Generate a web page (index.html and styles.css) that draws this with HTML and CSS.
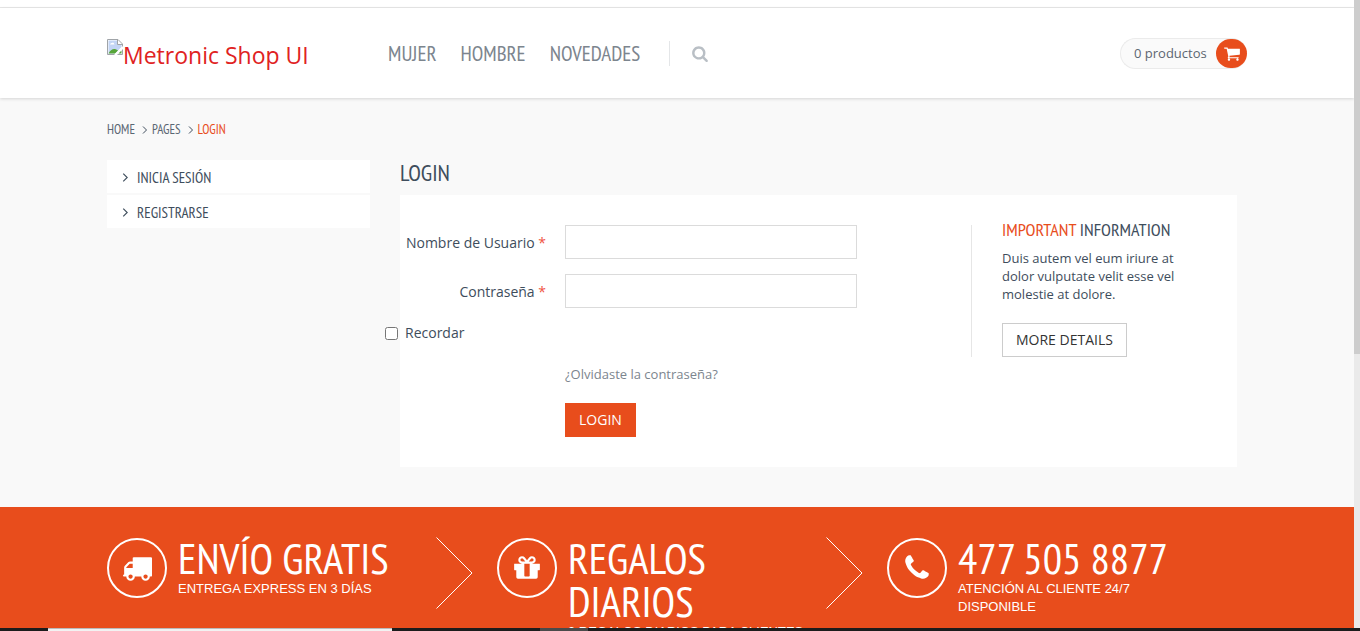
FILE: index.html
```html
<!DOCTYPE html>
<html lang="es">
<head>
<meta charset="utf-8">
<meta name="viewport" content="width=device-width, initial-scale=1">
<title>Login - Metronic Shop UI</title>
<link rel="stylesheet" href="styles.css">
</head>
<body>
<svg class="sprite" aria-hidden="true">
  <symbol id="search" viewBox="0 -1536 1664 1792"><path transform="scale(1,-1)" fill-rule="evenodd" d="M1152 704q0 185 -131.5 316.5t-316.5 131.5t-316.5 -131.5t-131.5 -316.5t131.5 -316.5t316.5 -131.5t316.5 131.5t131.5 316.5zM1664 -128q0 -52 -38 -90t-90 -38q-54 0 -90 38l-343 342q-179 -124 -399 -124q-143 0 -273.5 55.5t-225 150t-150 225t-55.5 273.5t55.5 273.5t150 225t225 150t273.5 55.5t273.5 -55.5t225 -150t150 -225t55.5 -273.5q0 -220 -124 -399l343 -343q37 -37 37 -90z"/></symbol>
  <symbol id="cart" viewBox="0 -1536 1664 1792"><path transform="scale(1,-1)" d="M640 0q0 -52 -38 -90t-90 -38t-90 38t-38 90t38 90t90 38t90 -38t38 -90zM1536 0q0 -52 -38 -90t-90 -38t-90 38t-38 90t38 90t90 38t90 -38t38 -90zM1664 1088v-512q0 -24 -16.5 -42.5t-40.5 -21.5l-1044 -122q13 -60 13 -70q0 -16 -24 -64h920q26 0 45 -19t19 -45t-19 -45t-45 -19h-1024q-26 0 -45 19t-19 45q0 11 8 31.5t16 36t21.5 40t15.5 29.5l-177 823h-204q-26 0 -45 19t-19 45t19 45t45 19h256q16 0 28.5 -6.5t19.5 -15.5t13 -24.5t8 -26t5.5 -29.5t4.5 -26h1201q26 0 45 -19t19 -45z"/></symbol>
  <symbol id="truck" viewBox="0 -1536 1792 1792"><path transform="scale(1,-1)" d="M640 128q0 52 -38 90t-90 38t-90 -38t-38 -90t38 -90t90 -38t90 38t38 90zM256 640h384v256h-158q-13 0 -22 -9l-195 -195q-9 -9 -9 -22v-30zM1536 128q0 52 -38 90t-90 38t-90 -38t-38 -90t38 -90t90 -38t90 38t38 90zM1792 1216v-1024q0 -15 -4 -26.5t-13.5 -18.5t-16.5 -11.5t-23.5 -6t-22.5 -2t-25.5 0t-22.5 0.5q0 -106 -75 -181t-181 -75t-181 75t-75 181h-384q0 -106 -75 -181t-181 -75t-181 75t-75 181h-64q-3 0 -22.5 -0.5t-25.5 0t-22.5 2t-23.5 6t-16.5 11.5t-13.5 18.5t-4 26.5q0 26 19 45t45 19v320q0 8 -0.5 35t0 38t2.5 34.5t6.5 37t14 30.5t22.5 30l198 198q19 19 50.5 32t58.5 13h160v192q0 26 19 45t45 19h1024q26 0 45 -19t19 -45z"/></symbol>
  <symbol id="gift" viewBox="0 -1536 1536 1792"><path transform="scale(1,-1)" d="M928 180v56v468v192h-320v-192v-468v-56q0 -25 18 -38.5t46 -13.5h192q28 0 46 13.5t18 38.5zM472 1024h195l-126 161q-26 31 -69 31q-40 0 -68 -28t-28 -68t28 -68t68 -28zM1160 1120q0 40 -28 68t-68 28q-43 0 -69 -31l-125 -161h194q40 0 68 28t28 68zM1536 864v-320q0 -14 -9 -23t-23 -9h-96v-416q0 -40 -28 -68t-68 -28h-1088q-40 0 -68 28t-28 68v416h-96q-14 0 -23 9t-9 23v320q0 14 9 23t23 9h440q-93 0 -158.5 65.5t-65.5 158.5t65.5 158.5t158.5 65.5q107 0 168 -77l128 -165l128 165q61 77 168 77q93 0 158.5 -65.5t65.5 -158.5t-65.5 -158.5t-158.5 -65.5h440q14 0 23 -9t9 -23z"/></symbol>
  <symbol id="phone" viewBox="0 -1536 1408 1792"><path transform="scale(1,-1)" d="M1408 296q0 -27 -10 -70.5t-21 -68.5q-21 -50 -122 -106q-94 -51 -186 -51q-27 0 -53 3.5t-57.5 12.5t-47 14.5t-55.5 20.5t-49 18q-98 35 -175 83q-127 79 -264 216t-216 264q-48 77 -83 175q-3 9 -18 49t-20.5 55.5t-14.5 47t-12.5 57.5t-3.5 53q0 92 51 186q56 101 106 122q25 11 68.5 21t70.5 10q14 0 21 -3q18 -6 53 -76q11 -19 30 -54t35 -63.5t31 -53.5q3 -4 17.5 -25t21.5 -35.5t7 -28.5q0 -20 -28.5 -50t-62 -55t-62 -53t-28.5 -46q0 -9 5 -22.5t8.5 -20.5t14 -24t11.5 -19q76 -137 174 -235t235 -174q2 -1 19 -11.5t24 -14t20.5 -8.5t22.5 -5q18 0 46 28.5t53 62t55 62t50 28.5q14 0 28.5 -7t35.5 -21.5t25 -17.5q25 -15 53.5 -31t63.5 -35t54 -30q70 -35 76 -53q3 -7 3 -21z"/></symbol>
  <symbol id="angle" viewBox="0 0 6 8"><path d="M1 0.5L4.5 4L1 7.5" fill="none" stroke="currentColor" stroke-width="1"/></symbol>
  <symbol id="chevron" viewBox="0 0 37 72"><path d="M0.5 0.5L36 36L0.5 71.5" fill="none" stroke="currentColor" stroke-width="1"/></symbol>
</svg>
<div class="window">
  <div class="page">
    <div class="topbar"></div>
    <header class="header">
      <div class="container header-row">
        <a class="logo" href="#">
          <svg class="broken" viewBox="0 0 16 16" aria-hidden="true">
            <path d="M0.5 0.5H11L15.5 5V15.5H0.5Z" fill="#fff" stroke="#a0a4a8"/>
            <path d="M1.5 1.5H10.5V5.5H14.5V8L8 14.5H1.5Z" fill="#c3d5f5"/>
            <path d="M3 5.5Q3.500 3.500 5 4Q6.500 2.500 7.500 5.500Z" fill="#fff"/>
            <path d="M1.500 14.500Q4 9.500 8 10Q10 10.500 11 11.500L8 14.500Z" fill="#57a639"/>
            <path d="M16 7L7 16H10L16 10Z" fill="#fff"/>
            <path d="M14.500 11.500V14.500H11.500Z" fill="#57a639"/>
            <path d="M10.500 0.500V5.500H15.500" fill="none" stroke="#a0a4a8"/>
          </svg><span>Metronic Shop UI</span>
        </a>
        <nav class="nav">
          <a href="#">MUJER</a>
          <a href="#">HOMBRE</a>
          <a href="#">NOVEDADES</a>
          <button class="search" type="button" aria-label="Buscar"><svg><use href="#search"/></svg></button>
        </nav>
        <a class="cart" href="#"><span>0 productos</span><i class="cart-badge"><svg><use href="#cart"/></svg></i></a>
      </div>
    </header>
    <main class="container main">
      <nav class="crumbs">
        <a href="#">HOME</a><svg><use href="#angle"/></svg>
        <a href="#">PAGES</a><svg><use href="#angle"/></svg>
        <span class="accent">LOGIN</span>
      </nav>
      <div class="columns">
        <ul class="sidebar">
          <li><a href="#"><svg><use href="#angle"/></svg>INICIA SESIÓN</a></li>
          <li><a href="#"><svg><use href="#angle"/></svg>REGISTRARSE</a></li>
        </ul>
        <section class="content">
          <h1>LOGIN</h1>
          <div class="panel">
            <form class="form">
              <label for="user">Nombre de Usuario <b>*</b></label>
              <input class="field" id="user" type="text">
              <label for="pass">Contraseña <b>*</b></label>
              <input class="field" id="pass" type="password">
              <div class="remember"><input id="remember" type="checkbox"><label for="remember">Recordar</label></div>
              <a class="forgot" href="#">¿Olvidaste la contraseña?</a>
              <button class="submit" type="submit">LOGIN</button>
            </form>
            <aside class="info">
              <h2><span class="accent">IMPORTANT</span> INFORMATION</h2>
              <p>Duis autem vel eum iriure at dolor vulputate velit esse vel molestie at dolore.</p>
              <button class="details" type="button">MORE DETAILS</button>
            </aside>
          </div>
        </section>
      </div>
    </main>
    <section class="steps">
      <div class="container steps-row">
        <div class="step">
          <span class="disc"><svg class="wide"><use href="#truck"/></svg></span>
          <div class="step-text"><h2>ENVÍO GRATIS</h2><em>ENTREGA EXPRESS EN 3 DÍAS</em></div>
          <svg class="chevron"><use href="#chevron"/></svg>
        </div>
        <div class="step">
          <span class="disc"><svg><use href="#gift"/></svg></span>
          <div class="step-text"><h2>REGALOS DIARIOS</h2><em>3 REGALOS DIARIOS PARA CLIENTES</em></div>
          <svg class="chevron"><use href="#chevron"/></svg>
        </div>
        <div class="step">
          <span class="disc"><svg><use href="#phone"/></svg></span>
          <div class="step-text"><h2>477 505 8877</h2><em>ATENCIÓN AL CLIENTE 24/7 DISPONIBLE</em></div>
        </div>
      </div>
    </section>
  </div>
  <div class="scrollbar"><div class="thumb"></div></div>
</div>
<div class="taskbar"><span class="task-search"></span><span class="task-active"></span></div>
</body>
</html>
```
FILE: styles.css
```css
* { box-sizing: border-box; }

body {
  margin: 0;
  height: 100vh;
  display: flex;
  flex-direction: column;
  overflow: hidden;
  background: #f9f9f9;
  color: #3e4d5c;
  font: 13px/18px "Open Sans", sans-serif;
}

h1, h2, p, ul { margin: 0; padding: 0; font-weight: 400; }
a { color: inherit; text-decoration: none; }
button { font: inherit; cursor: pointer; }
svg { fill: currentColor; flex: none; }
.sprite { position: absolute; width: 0; height: 0; }
.accent { color: #e84d1c; }

.nav, .crumbs, .sidebar, h1, h2 {
  font-family: "PT Sans Narrow", "Liberation Sans Narrow", "Liberation Sans", sans-serif;
}

.window { flex: 1; min-height: 0; display: flex; }
.page { flex: 1; min-width: 0; overflow: hidden; }
.container { max-width: 1170px; margin: 0 auto; padding: 0 15px; }

.scrollbar { width: 6px; background: #eaeaea; }
.thumb { height: 354px; background: #cdcdcd; }

.topbar { height: 8px; background: #fff; border-bottom: 1px solid #e8e8e8; }
.header {
  background: #fff;
  box-shadow: 0 1px 3px rgba(0, 0, 0, 0.15);
}
.header-row { display: flex; align-items: center; height: 90px; }
.logo { display: flex; width: 281px; padding-top: 4px; color: #e02222; font-size: 23px; line-height: 32px; }
.broken { width: 16px; height: 16px; }
.nav { display: flex; align-items: center; gap: 24px; color: #7c858e; font-size: 21px; line-height: 24px; }
.nav a { padding-top: 2px; }
.search {
  display: flex;
  align-items: center;
  height: 25px;
  margin-left: 5px;
  padding: 0 0 0 22px;
  border: 0;
  border-left: 1px solid #e4e6e8;
  background: none;
  color: #b9bfc5;
}
.search svg { width: 16px; height: 17px; }
.cart {
  display: flex;
  align-items: center;
  justify-content: space-between;
  width: 127px;
  height: 31px;
  margin-left: auto;
  padding-left: 13px;
  border: 1px solid #ebebeb;
  border-right: 0;
  border-radius: 16px;
  background: #fafafa;
  color: #5d6671;
}
.cart-badge {
  display: flex;
  align-items: center;
  justify-content: center;
  width: 31px;
  height: 29px;
  border-radius: 15px;
  background: #e84d1c;
  color: #fff;
}
.cart-badge svg { width: 16px; height: 17px; }

.main { padding-bottom: 40px; }
.crumbs { display: flex; align-items: center; gap: 4px; padding: 23px 0 21px; font-size: 13px; }
.crumbs a { color: #5a6673; }
.crumbs svg { width: 6px; height: 8px; margin-left: 3px; }
.columns { display: grid; grid-template-columns: 263px 1fr; gap: 30px; }
.sidebar { list-style: none; font-size: 15px; }
.sidebar a { display: flex; align-items: center; gap: 8px; height: 33px; margin-bottom: 2px; padding: 2px 15px 0; background: #fff; }
.sidebar svg { width: 7px; height: 9px; }
.content { padding-right: 10px; }
h1 { font-size: 23px; line-height: 25px; padding-bottom: 10px; }

.panel { display: flex; padding: 30px 0; background: #fff; }
.form {
  flex: 1;
  display: grid;
  grid-template-columns: 146px minmax(0, 292px);
  column-gap: 19px;
  align-content: start;
  align-items: center;
  font-size: 14px;
}
.form > label { text-align: right; white-space: nowrap; margin-bottom: 13px; }
.form b { font-weight: 400; color: #f0533f; }
.field { height: 34px; margin: 0 0 15px; padding: 6px 12px; border: 1px solid #dbdbdb; background: #fff; font: inherit; }
.remember { grid-column: 1 / -1; display: flex; align-items: center; gap: 7px; height: 20px; margin-left: -15px; }
.remember input { width: 13px; height: 13px; margin: 0; }
.forgot { grid-column: 2; padding: 22px 0 20px; font-size: 13px; color: #7c858e; }
.submit {
  grid-column: 2;
  justify-self: start;
  height: 34px;
  padding: 0 14px;
  border: 0;
  background: #e84d1c;
  color: #fff;
}
.info { width: 266px; align-self: flex-start; padding: 0 30px; border-left: 1px solid #e6e6e6; }
.info h2 { font-size: 18px; line-height: 10px; margin-bottom: 14px; }
.info p { margin-bottom: 20px; }
.details { display: block; height: 34px; padding: 0 13px; border: 1px solid #ccc; background: #fff; color: #333; font-size: 14px; }

.steps { background: #e84d1c; color: #fff; padding: 30px 0; }
.steps-row { display: grid; grid-template-columns: repeat(3, minmax(0, 1fr)); gap: 30px; }
.step { display: flex; gap: 11px; }
.disc {
  flex: none;
  display: flex;
  align-items: center;
  justify-content: center;
  width: 60px;
  height: 60px;
  margin-top: 1px;
  border: 2px solid #fff;
  border-radius: 50%;
}
.disc svg { width: 26px; height: 30px; }
.disc .wide { width: 30px; }
.step-text { flex: none; width: 247px; }
.step h2 { font-size: 43px; line-height: 43px; }
.step em { display: block; font: 13px/18px "Liberation Sans", Arial, sans-serif; }
.chevron { width: 37px; height: 72px; }

.taskbar { display: flex; height: 3px; padding-left: 48px; background: #1c1c1c; }
.task-search { width: 344px; background: #f2f2f2; border-top: 1px solid #bbb; }
.task-active { width: 48px; margin-left: 148px; background: #4a4a4a; }
```
